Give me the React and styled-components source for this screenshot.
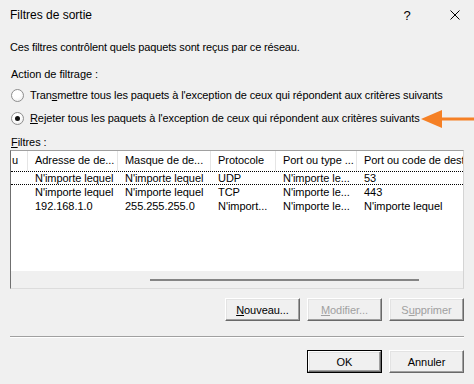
import React from 'react';
import styled, { createGlobalStyle } from 'styled-components';

const GlobalStyle = createGlobalStyle`
  html, body {
    margin: 0;
    padding: 0;
    background: #f0f0f0;
  }
  body {
    font-family: "Liberation Sans", Arial, sans-serif;
    font-size: 11px;
    letter-spacing: -0.05px;
    color: #000;
  }
`;

const Window = styled.div`
  width: 474px;
  height: 384px;
  background: #f0f0f0;
  overflow: hidden;
  box-sizing: border-box;
`;

const TitleBar = styled.div`
  height: 30px;
  display: flex;
  align-items: center;
  padding: 0 0 0 10px;
`;

const Title = styled.div`
  flex: 1;
  font-size: 12px;
  letter-spacing: 0;
`;

const TitleButton = styled.div`
  width: ${p => p.w}px;
  margin-right: ${p => p.mr || 0}px;
  height: 30px;
  display: flex;
  align-items: center;
  justify-content: center;
  font-size: 13px;
`;

const Body = styled.div`
  padding: 0 10px 0 10px;
`;

const Line = styled.div`
  height: 14px;
  line-height: 14px;
  margin-top: ${p => p.mt}px;
  padding-left: ${p => p.pl || 0}px;
  letter-spacing: ${p => (p.tight ? '-0.15px' : 'inherit')};
`;

const RadioRow = styled.div`
  height: 16px;
  display: flex;
  align-items: center;
  margin-top: ${p => p.mt}px;
  padding-left: 1px;
  position: relative;
  letter-spacing: -0.1px;
`;

const RadioCircle = styled.span`
  width: 11px;
  height: 11px;
  border-radius: 50%;
  border: 1px solid #8e8e8e;
  background: radial-gradient(circle at 40% 35%, #ffffff 40%, #e6e6e6 100%);
  display: flex;
  align-items: center;
  justify-content: center;
  margin-right: 6px;
  flex: none;

  &::after {
    content: '';
    display: ${p => (p.checked ? 'block' : 'none')};
    width: 5px;
    height: 5px;
    border-radius: 50%;
    background: #111;
  }
`;

const U = styled.span`
  text-decoration: underline;
  text-underline-offset: 1px;
`;

const Arrow = styled.svg`
  position: absolute;
  left: 410px;
  top: -1px;
`;

const ListBox = styled.div`
  margin-top: 1px;
  height: 139px;
  box-sizing: border-box;
  border-top: 1px solid #a0a0a0;
  border-left: 1px solid #6f6f6f;
  border-right: 1px solid #d4d4d4;
  border-bottom: 1px solid #dcdcdc;
  background: #fff;
  display: flex;
  flex-direction: column;
  overflow: hidden;
`;

const Grid = styled.div`
  display: grid;
  grid-template-columns: 17px 90px 93px 65px 81px 140px;
  white-space: nowrap;
`;

const HeaderRow = styled(Grid)`
  height: 20px;
`;

const HeaderCell = styled.div`
  line-height: 19px;
  padding-left: ${p => p.pl ?? 7}px;
  border-right: 1px solid #e5e5e5;
  overflow: hidden;
`;

const Rows = styled.div`
  flex: 1;
`;

const Row = styled(Grid)`
  height: 14px;
  box-sizing: border-box;
  line-height: 12px;
  border-top: 1px ${p => (p.focused ? 'dotted #000' : 'solid transparent')};
  border-bottom: 1px ${p => (p.focused ? 'dotted #000' : 'solid transparent')};
`;

const Cell = styled.div`
  padding-left: 7px;
  overflow: hidden;
`;

const HScroll = styled.div`
  height: 17px;
  background: #f0f0f0;
  display: flex;
  align-items: center;
  padding-left: 139px;
`;

const Thumb = styled.div`
  width: 269px;
  height: 2px;
  background: #858585;
`;

const ButtonRow = styled.div`
  display: flex;
  justify-content: flex-end;
  gap: 7px;
  margin-top: ${p => p.mt}px;
`;

const Button = styled.button`
  box-sizing: border-box;
  font-family: "Liberation Sans", Arial, sans-serif;
  font-size: 11px;
  letter-spacing: -0.05px;
  color: ${p => (p.disabled ? '#a0a0a0' : '#000')};
  background: #f0f0f0;
  padding: 0;
  border: 1px solid;
  border-color: #fff #696969 #696969 #fff;
  box-shadow: ${p =>
    p.primary
      ? '0 0 0 1px #000, inset -1px -1px 0 #a0a0a0, inset 1px 1px 0 #e3e3e3'
      : 'inset -1px -1px 0 #a0a0a0, inset 1px 1px 0 #e3e3e3'};
  margin: ${p => (p.primary ? '1px' : '0')};
  width: ${p => (p.primary ? '73px' : '75px')};
  height: ${p => (p.primary ? '21px' : '23px')};
`;

const Separator = styled.div`
  margin-top: 15px;
  height: 1px;
  background: #a0a0a0;
  border-bottom: 1px solid #fff;
`;

const columns = ['u', 'Adresse de de...', 'Masque de de...', 'Protocole', 'Port ou type ...', 'Port ou code de destination'];

const rows = [
  ['', "N'importe lequel", "N'importe lequel", 'UDP', "N'importe le...", '53'],
  ['', "N'importe lequel", "N'importe lequel", 'TCP', "N'importe le...", '443'],
  ['', '192.168.1.0', '255.255.255.0', "N'import...", "N'importe le...", "N'importe lequel"],
];

export default function App() {
  return (
    <Window>
      <GlobalStyle />
      <TitleBar>
        <Title>Filtres de sortie</Title>
        <TitleButton w={30} mr={14}>?</TitleButton>
        <TitleButton w={38}>
          <svg width="10" height="10" viewBox="0 0 10 10">
            <path d="M0.5 0.5 L9.5 9.5 M9.5 0.5 L0.5 9.5" stroke="#000" strokeWidth="1" />
          </svg>
        </TitleButton>
      </TitleBar>
      <Body>
        <Line mt={10} tight>Ces filtres contrôlent quels paquets sont reçus par ce réseau.</Line>
        <Line mt={13} pl={1}>Action de filtrage :</Line>
        <RadioRow mt={6}>
          <RadioCircle />
          <span>Tran<U>s</U>mettre tous les paquets à l'exception de ceux qui répondent aux critères suivants</span>
        </RadioRow>
        <RadioRow mt={7}>
          <RadioCircle checked />
          <span><U>R</U>ejeter tous les paquets à l'exception de ceux qui répondent aux critères suivants</span>
          <Arrow width="54" height="20" viewBox="0 0 54 20">
            <polygon points="1,10 22,1 22,19" fill="#f58025" />
            <rect x="21" y="8.5" width="33" height="3" fill="#f58025" />
          </Arrow>
        </RadioRow>
        <Line mt={9} pl={1}><U>F</U>iltres :</Line>
        <ListBox>
          <HeaderRow>
            {columns.map((c, i) => (
              <HeaderCell key={i} pl={i === 0 ? 1 : 7}>{c}</HeaderCell>
            ))}
          </HeaderRow>
          <Rows>
            {rows.map((r, i) => (
              <Row key={i} focused={i === 0}>
                {r.map((c, j) => (
                  <Cell key={j}>{c}</Cell>
                ))}
              </Row>
            ))}
          </Rows>
          <HScroll>
            <Thumb />
          </HScroll>
        </ListBox>
        <ButtonRow mt={9}>
          <Button><U>N</U>ouveau...</Button>
          <Button disabled><U>M</U>odifier...</Button>
          <Button disabled>S<U>u</U>pprimer</Button>
        </ButtonRow>
        <Separator />
        <ButtonRow mt={12}>
          <Button primary>OK</Button>
          <Button>Annuler</Button>
        </ButtonRow>
      </Body>
    </Window>
  );
}
